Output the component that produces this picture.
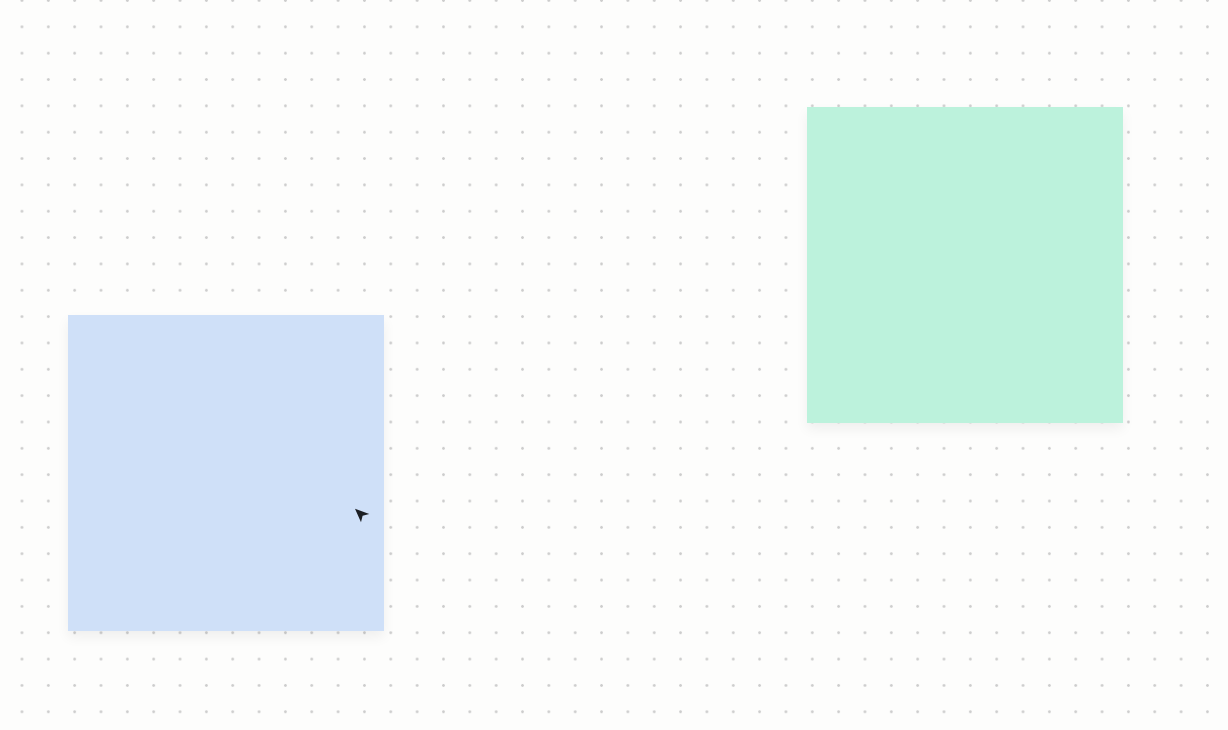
export default function App() {
  return (
    <div className="relative h-[730px] w-full overflow-hidden bg-[#fdfdfc] bg-[radial-gradient(circle,#cdcdcd_1.1px,transparent_1.6px)] bg-[size:26.35px_26.35px] bg-[position:8.8px_-12.7px]">
      {/* sticky notes */}
      <div className="absolute left-[68px] top-[315px] h-[316px] w-[316px] bg-[#cfe0f8] shadow-[0_6px_12px_rgba(0,0,0,0.06)]" />
      <div className="absolute left-[807px] top-[107px] h-[316px] w-[316px] bg-[#bcf2dc] shadow-[0_6px_12px_rgba(0,0,0,0.06)]" />

      {/* cursor */}
      <svg
        className="absolute left-[353px] top-[507px]"
        width="18"
        height="17"
        viewBox="0 0 18 17"
      >
        <path d="M2 1.8 L16.3 7 L9.6 8.7 L8 15.3 Z" fill="#1c1f24" />
      </svg>
    </div>
  );
}
